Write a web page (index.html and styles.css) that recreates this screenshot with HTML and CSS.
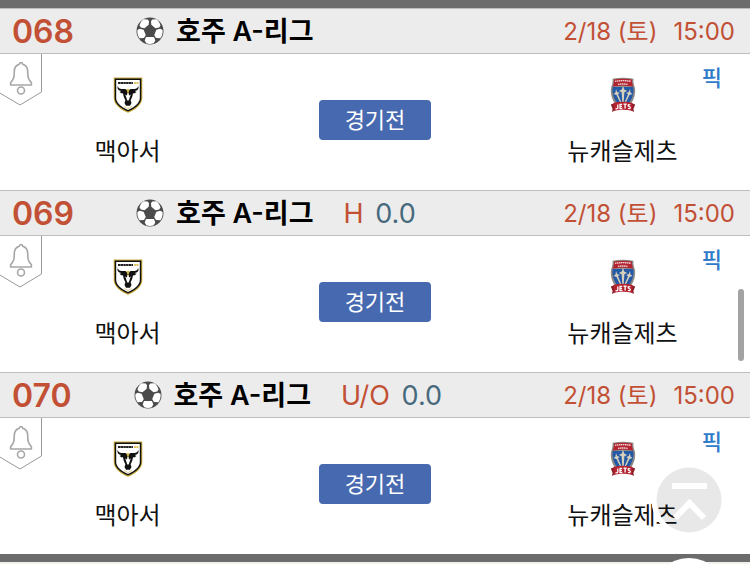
FILE: index.html
```html
<!DOCTYPE html>
<html lang="ko">

<head>
    <meta charset="UTF-8">
    <meta name="viewport" content="width=device-width, initial-scale=1.0">
    <title>경기 목록</title>
    <link rel="stylesheet" href="styles.css">
</head>

<body>
    <!-- Shared icons -->
    <svg class="sprite" aria-hidden="true">
        <symbol id="ball" viewBox="0 0 28 28">
            <circle cx="14" cy="14" r="13.500" fill="#4b4b4b"/>
            <path fill="#fff" d="M7.500 2.300l4.300.1 1.200 1.800-.3 3.600-4.200 3.400-3.700-.6-1.300-2c.6-2.600 2-4.800 4-6.300zM20.500 2.300l-4.300.1L15 4.200l.3 3.600 4.200 3.400 3.700-.6 1.300-2c-.6-2.600-2-4.800-4-6.300zM1.400 13l2.400-1.200 3.800 1 2.200 5.200-1.800 3-4.500.3C1.800 18.800 1.100 15.900 1.400 13zM26.600 13l-2.400-1.200-3.800 1-2.200 5.200 1.800 3 4.500.3c1.700-2.500 2.400-5.400 2.100-8.300zM10 20h8l1.300 3.600-1.600 2.700c-2.400.9-5 .9-7.400 0l-1.600-2.700z"/>
        </symbol>
        <symbol id="bell" viewBox="0 0 43 53">
            <path fill="#fff" stroke="#999" d="M41.500-1v39L20 51-1 38.500V-1"/>
            <g fill="none" stroke="#a6a6a6" stroke-width="1.600" stroke-linejoin="round">
                <path d="M21 8.500c-1.200 0-1.500.7-1.700 1.700-3.400 1-5 3.700-5 7.300 0 6.500-.8 8-3.700 11.200V31h20.800v-2.300c-2.900-3.200-3.700-4.700-3.700-11.200 0-3.600-1.600-6.300-5-7.300-.2-1-.5-1.700-1.700-1.700z"/>
                <circle cx="21" cy="36.500" r="3.500"/>
            </g>
        </symbol>
        <symbol id="macarthur" viewBox="0 0 30 36">
            <path fill="#c8ab3c" d="M.7.600h28.600V21c0 6-6 11.500-14.300 14.700C6.700 32.500.7 27 .7 21z"/>
            <path fill="#111" d="M1.700 1.600h26.600V21c0 5.300-5.300 10.400-13.300 13.600C7 31.400 1.700 26.300 1.700 21z"/>
            <path fill="#fff" d="M3.200 3h23.600v18c0 4.500-4.600 8.900-11.800 12C7.800 29.900 3.200 25.500 3.200 21z"/>
            <path fill="none" stroke="#222" stroke-width="2" stroke-dasharray="2.400 .3" d="M5 6h15"/>
            <path fill="none" stroke="#e0c766" stroke-width="2" stroke-dasharray="2.400 .3" d="M21 6h4.500"/>
            <path fill="#111" d="M4.600 9c.8 2.200 2 2.800 4.200 2.900l3.600.2L15 14l2.600-1.900 3.600-.2c2.200-.1 3.400-.7 4.200-2.900.7 3-.8 4.600-3.600 5.100l1.700.8-2.300 1.500-1.200-.2c-.4 3-1.300 5.200-2.400 7l.9 2.700-1.500 2.900h-4l-1.500-2.900.9-2.700c-1.100-1.800-2-4-2.400-7l-1.200.2-2.300-1.500 1.700-.8c-2.800-.5-4.300-2.100-3.600-5.100z"/>
            <path fill="#fff" d="M14.300 23.400l-2.100-5.800 1.700.8.500-2.400h1.200l.5 2.400 1.700-.8-2.100 5.800z"/>
            <path fill="#d6b84a" d="M13.300 12h3.400L15 17.500z"/>
            <path fill="none" stroke="#d9c277" stroke-width=".8" d="M11 29.600l4 2 4-2"/>
        </symbol>
        <symbol id="jets" viewBox="0 0 26 36">
            <path fill="#8d8a86" d="M2.500 1.800C9 .3 17 .3 23.500 1.800c-.4 3.200.2 5.600 1.300 8.500 1.200 5.500-.6 12.500-4.300 17h-15C1.800 22.800 0 15.800 1.200 10.300 2.300 7.400 2.900 5 2.500 1.800z"/>
            <path fill="#245aa5" d="M2.700 10h20.600c1 6-1.300 13-5.300 17H8c-4-4-6.300-11-5.300-17z"/>
            <path fill="#b32430" d="M4 2.600c5.500-1.200 12.500-1.200 18 0 0 2.800.3 4.700 1.300 7.200-5.500-1.400-15.100-1.400-20.600 0 1-2.500 1.300-4.400 1.300-7.200z"/>
            <path fill="none" stroke="#f0dada" stroke-width="1.400" stroke-dasharray="1.500 .5" d="M5 4.400c5-1 11-1 16 0M8 7.400c3-.5 7-.5 10 0"/>
            <path fill="#d8cfbc" d="M13 8.500l1.200 4 3 1.500-2.800 1.300L13.700 25h-1.400l-.7-9.700L8.800 14l3-1.500zM6 12l1.200 3 2.600 1-1.800 1.300L11.300 25h-1.400L6.500 18 3.500 17l2-1.500zM20 12l-1.200 3-2.600 1 1.800 1.300L14.700 25h1.400l3.400-7 3-1-2-1.500z"/>
            <path fill="#8e1f29" d="M.8 27.500l4.500-1.800v7.500L2 35l.6-3zM25.200 27.500l-4.500-1.800v7.500L24 35l-.6-3z"/>
            <path fill="#b32430" d="M3.500 26c6-1.700 13-1.700 19 0l-.7 7.800c-5.500-1.300-12.100-1.300-17.600 0z"/>
            <path fill="none" stroke="#fff" stroke-width="1.300" d="M7.800 27.500v3.700q-1 1.200-2.200.3M12.200 27.300H10v4.200h2.400M10 29.300h2M13.500 27.200h3.200M15.100 27.200v4.300M20.300 28q-2.200-.8-2.200.5c0 1.200 2.200.8 2.200 2 0 1.300-1.500 1.200-2.300.7"/>
        </symbol>
    </svg>

    <main class="match-list">
        <article class="match">
            <header class="match-head">
                <span class="match-no">068</span>
                <svg class="ball"><use href="#ball"/></svg>
                <h2 class="league">호주 A-리그</h2>
                <time class="match-date"><span>2/18 (토)</span><span>15:00</span></time>
            </header>
            <div class="match-body">
                <button class="alarm" type="button" aria-label="알림"><svg><use href="#bell"/></svg></button>
                <div class="team">
                    <svg class="emblem"><use href="#macarthur"/></svg>
                    <span>맥아서</span>
                </div>
                <button class="status" type="button">경기전</button>
                <div class="team">
                    <svg class="emblem"><use href="#jets"/></svg>
                    <span>뉴캐슬제츠</span>
                </div>
                <a class="pick" href="#">픽</a>
            </div>
        </article>

        <article class="match">
            <header class="match-head">
                <span class="match-no">069</span>
                <svg class="ball"><use href="#ball"/></svg>
                <h2 class="league">호주 A-리그</h2>
                <span class="odds"><span class="odds-type">H</span> 0.0</span>
                <time class="match-date"><span>2/18 (토)</span><span>15:00</span></time>
            </header>
            <div class="match-body">
                <button class="alarm" type="button" aria-label="알림"><svg><use href="#bell"/></svg></button>
                <div class="team">
                    <svg class="emblem"><use href="#macarthur"/></svg>
                    <span>맥아서</span>
                </div>
                <button class="status" type="button">경기전</button>
                <div class="team">
                    <svg class="emblem"><use href="#jets"/></svg>
                    <span>뉴캐슬제츠</span>
                </div>
                <a class="pick" href="#">픽</a>
            </div>
        </article>

        <article class="match">
            <header class="match-head">
                <span class="match-no">070</span>
                <svg class="ball"><use href="#ball"/></svg>
                <h2 class="league">호주 A-리그</h2>
                <span class="odds"><span class="odds-type">U/O</span> 0.0</span>
                <time class="match-date"><span>2/18 (토)</span><span>15:00</span></time>
            </header>
            <div class="match-body">
                <button class="alarm" type="button" aria-label="알림"><svg><use href="#bell"/></svg></button>
                <div class="team">
                    <svg class="emblem"><use href="#macarthur"/></svg>
                    <span>맥아서</span>
                </div>
                <button class="status" type="button">경기전</button>
                <div class="team">
                    <svg class="emblem"><use href="#jets"/></svg>
                    <span>뉴캐슬제츠</span>
                </div>
                <a class="pick" href="#">픽</a>
            </div>
        </article>
    </main>

    <!-- Floating buttons -->
    <div class="floating">
        <button class="float-btn" type="button" aria-label="맨 위로">
            <svg viewBox="0 0 78 78">
                <circle cx="39" cy="39" r="35" fill="none" stroke="#fff" stroke-width="5"/>
                <circle cx="39" cy="39" r="32.500" fill="#000" fill-opacity=".09"/>
                <path fill="none" stroke="#fff" stroke-width="6" d="M22 25h35M25 57l14.500-15L54 57"/>
            </svg>
        </button>
        <button class="float-btn" type="button" aria-label="맨 아래로">
            <svg viewBox="0 0 78 78">
                <circle cx="39" cy="39" r="39" fill="#fff"/>
            </svg>
        </button>
    </div>
    <div class="scroll-thumb"></div>
</body>

</html>
```

FILE: styles.css
```css
* {
    box-sizing: border-box;
}

body {
    margin: 0;
    font-family: Inter, 'Noto Sans CJK KR', sans-serif;
    background-color: #f3f1ec;
    color: #111;
    height: 100vh;
    overflow: hidden;
}

.sprite {
    display: none;
}

button {
    border: none;
    padding: 0;
    background: none;
    font-family: inherit;
    cursor: pointer;
}

.match-list {
    border-top: 8px solid #6c6c6c;
    border-bottom: 8px solid #6c6c6c;
    background-color: #fff;
}

/* Match header bar */
.match-head {
    display: flex;
    align-items: center;
    height: 46px;
    padding: 0 15px 0 12px;
    background-color: #ececec;
    border-top: 1px solid #bdbdbd;
    border-bottom: 1px solid #bdbdbd;
    white-space: nowrap;
}

.match-no {
    margin-right: 62px;
    font-size: 32px;
    font-weight: 600;
    color: #c25035;
}

.ball {
    width: 28px;
    height: 28px;
    margin-right: 12px;
}

.league {
    margin: 0;
    padding-bottom: 4px;
    font-size: 27px;
    font-weight: 600;
    color: #000;
}

.odds {
    margin-left: 30px;
    font-size: 27px;
    color: #47697c;
}

.odds-type {
    margin-right: 4px;
    color: #c25035;
}

.match-date {
    display: flex;
    align-items: baseline;
    gap: 16px;
    margin-left: auto;
    padding-bottom: 4px;
    font-size: 24px;
    color: #c25035;
}

/* Match body */
.match-body {
    position: relative;
    display: grid;
    grid-template-columns: 1fr 112px 1fr;
    align-items: start;
    height: 136px;
}

.alarm {
    position: absolute;
    top: 0;
    left: 0;
}

.alarm svg {
    display: block;
    width: 43px;
    height: 53px;
}

.team {
    display: flex;
    flex-direction: column;
    align-items: center;
    gap: 21px;
    padding-top: 23px;
    font-size: 24px;
    line-height: 36px;
}

.team:first-of-type {
    padding-right: 64px;
}

.team:last-of-type {
    padding-left: 64px;
}

.emblem {
    width: 30px;
    height: 36px;
}

.status {
    height: 40px;
    margin-top: 46px;
    padding-bottom: 4px;
    border-radius: 4px;
    background-color: #4769b0;
    color: #fff;
    font-size: 22px;
}

.pick {
    position: absolute;
    top: 6px;
    right: 28px;
    font-size: 22px;
    font-weight: 500;
    color: #2f7bc9;
    text-decoration: none;
}

/* Floating buttons */
.floating {
    position: fixed;
    top: 461px;
    right: 22px;
    display: flex;
    flex-direction: column;
    gap: 19px;
}

.float-btn svg {
    display: block;
    width: 78px;
    height: 78px;
}

.scroll-thumb {
    position: fixed;
    top: 289px;
    right: 6px;
    width: 6px;
    height: 72px;
    border-radius: 3px;
    background-color: #a3a3a3;
}
```
